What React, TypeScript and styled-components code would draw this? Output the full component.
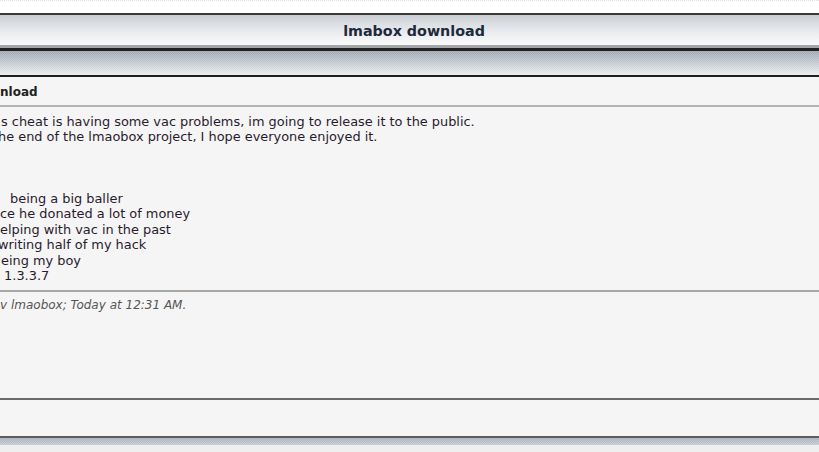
import React from "react";
import styled, { createGlobalStyle } from "styled-components";

const Global = createGlobalStyle`
  html, body { margin: 0; padding: 0; background: #ffffff; overflow: hidden; }
  body { font-family: "DejaVu Sans", Verdana, sans-serif; }
`;

const Page = styled.div`
  width: 819px;
  height: 452px;
  display: flex;
  flex-direction: column;
  background: #ffffff;
`;

const TopGap = styled.div`
  height: 13px;
  border-top: 1px dotted #e2e2e2;
  box-sizing: border-box;
`;

const Header = styled.div`
  height: 30px;
  border-top: 2px solid #3a3a3a;
  border-bottom: 3px solid #a4a6a8;
  background: linear-gradient(#c9ced3 0%, #e4e7ea 45%, #fbfbfb 100%);
  display: flex;
  align-items: center;
  justify-content: center;
  padding-left: 9px;
  box-sizing: content-box;
`;

const Title = styled.h1`
  margin: 0;
  font-family: "DejaVu Sans", Verdana, sans-serif;
  font-size: 14.3px;
  font-weight: bold;
  color: #1d2a3c;
  padding-top: 1px;
`;

const Texture = styled.div<{ $h: number }>`
  height: ${(p) => p.$h}px;
  border-top: 3px solid #222222;
  border-bottom: 2px solid #1e1e1e;
  background:
    linear-gradient(rgba(140, 150, 162, 0.6), rgba(240, 242, 244, 0.9)),
    repeating-conic-gradient(#b6bec6 0% 25%, #e0e4e8 0% 50%) 0 0 / 2px 2px;
`;

const Panel = styled.div`
  background: #f5f5f5;
  display: flex;
  flex-direction: column;
`;

const PostTitle = styled.div`
  height: 30px;
  display: flex;
  align-items: center;
  border-bottom: 2px solid #b4b4b4;
  font-size: 12px;
  font-weight: bold;
  color: #222222;
  padding-top: 1px;
  box-sizing: border-box;
`;

const Message = styled.div`
  padding: 7px 0 8px 0;
  font-size: 12.9px;
  line-height: 15.4px;
  color: #2a1a2e;
  height: 185px;
  box-sizing: border-box;
  border-bottom: 2px solid #a8a8a8;
`;

const Line = styled.div<{ $shift?: number }>`
  white-space: pre;
  height: 15.4px;
  margin-left: ${(p) => p.$shift ?? 0}px;
`;

const EditNote = styled.div`
  font-size: 12px;
  font-style: italic;
  color: #555555;
  padding-top: 6px;
  height: 108px;
  box-sizing: border-box;
  border-bottom: 2px solid #6a6a6a;
`;

const Footer = styled.div`
  height: 36px;
  border-bottom: 2px solid #5c5c5c;
`;

const BottomStrip = styled.div`
  height: 7px;
  background:
    linear-gradient(rgba(150, 160, 172, 0.5), rgba(200, 206, 212, 0.5)),
    repeating-conic-gradient(#b8c0c8 0% 25%, #d8dde2 0% 50%) 0 0 / 2px 2px;
`;

const Tail = styled.div`
  flex: 1;
  background: #efefef;
`;

const lines: { text: string; shift?: number }[] = [
  { text: "s cheat is having some vac problems, im going to release it to the public.", shift: 1 },
  { text: "he end of the lmaobox project, I hope everyone enjoyed it.", shift: -2 },
  { text: "" },
  { text: "" },
  { text: "" },
  { text: " being a big baller", shift: 6 },
  { text: "ce he donated a lot of money", shift: 0 },
  { text: "elping with vac in the past", shift: 0 },
  { text: "writing half of my hack", shift: -2 },
  { text: "eing my boy", shift: 1 },
  { text: " 1.3.3.7", shift: 0 },
];

export default function App() {
  return (
    <>
      <Global />
      <Page>
        <TopGap />
        <Header>
          <Title>lmabox download</Title>
        </Header>
        <Texture $h={24} />
        <Panel>
          <PostTitle>nload</PostTitle>
          <Message>
            {lines.map((l, i) => (
              <Line key={i} $shift={l.shift}>
                {l.text}
              </Line>
            ))}
          </Message>
          <EditNote>v lmaobox; Today at 12:31 AM.</EditNote>
          <Footer />
        </Panel>
        <BottomStrip />
        <Tail />
      </Page>
    </>
  );
}
